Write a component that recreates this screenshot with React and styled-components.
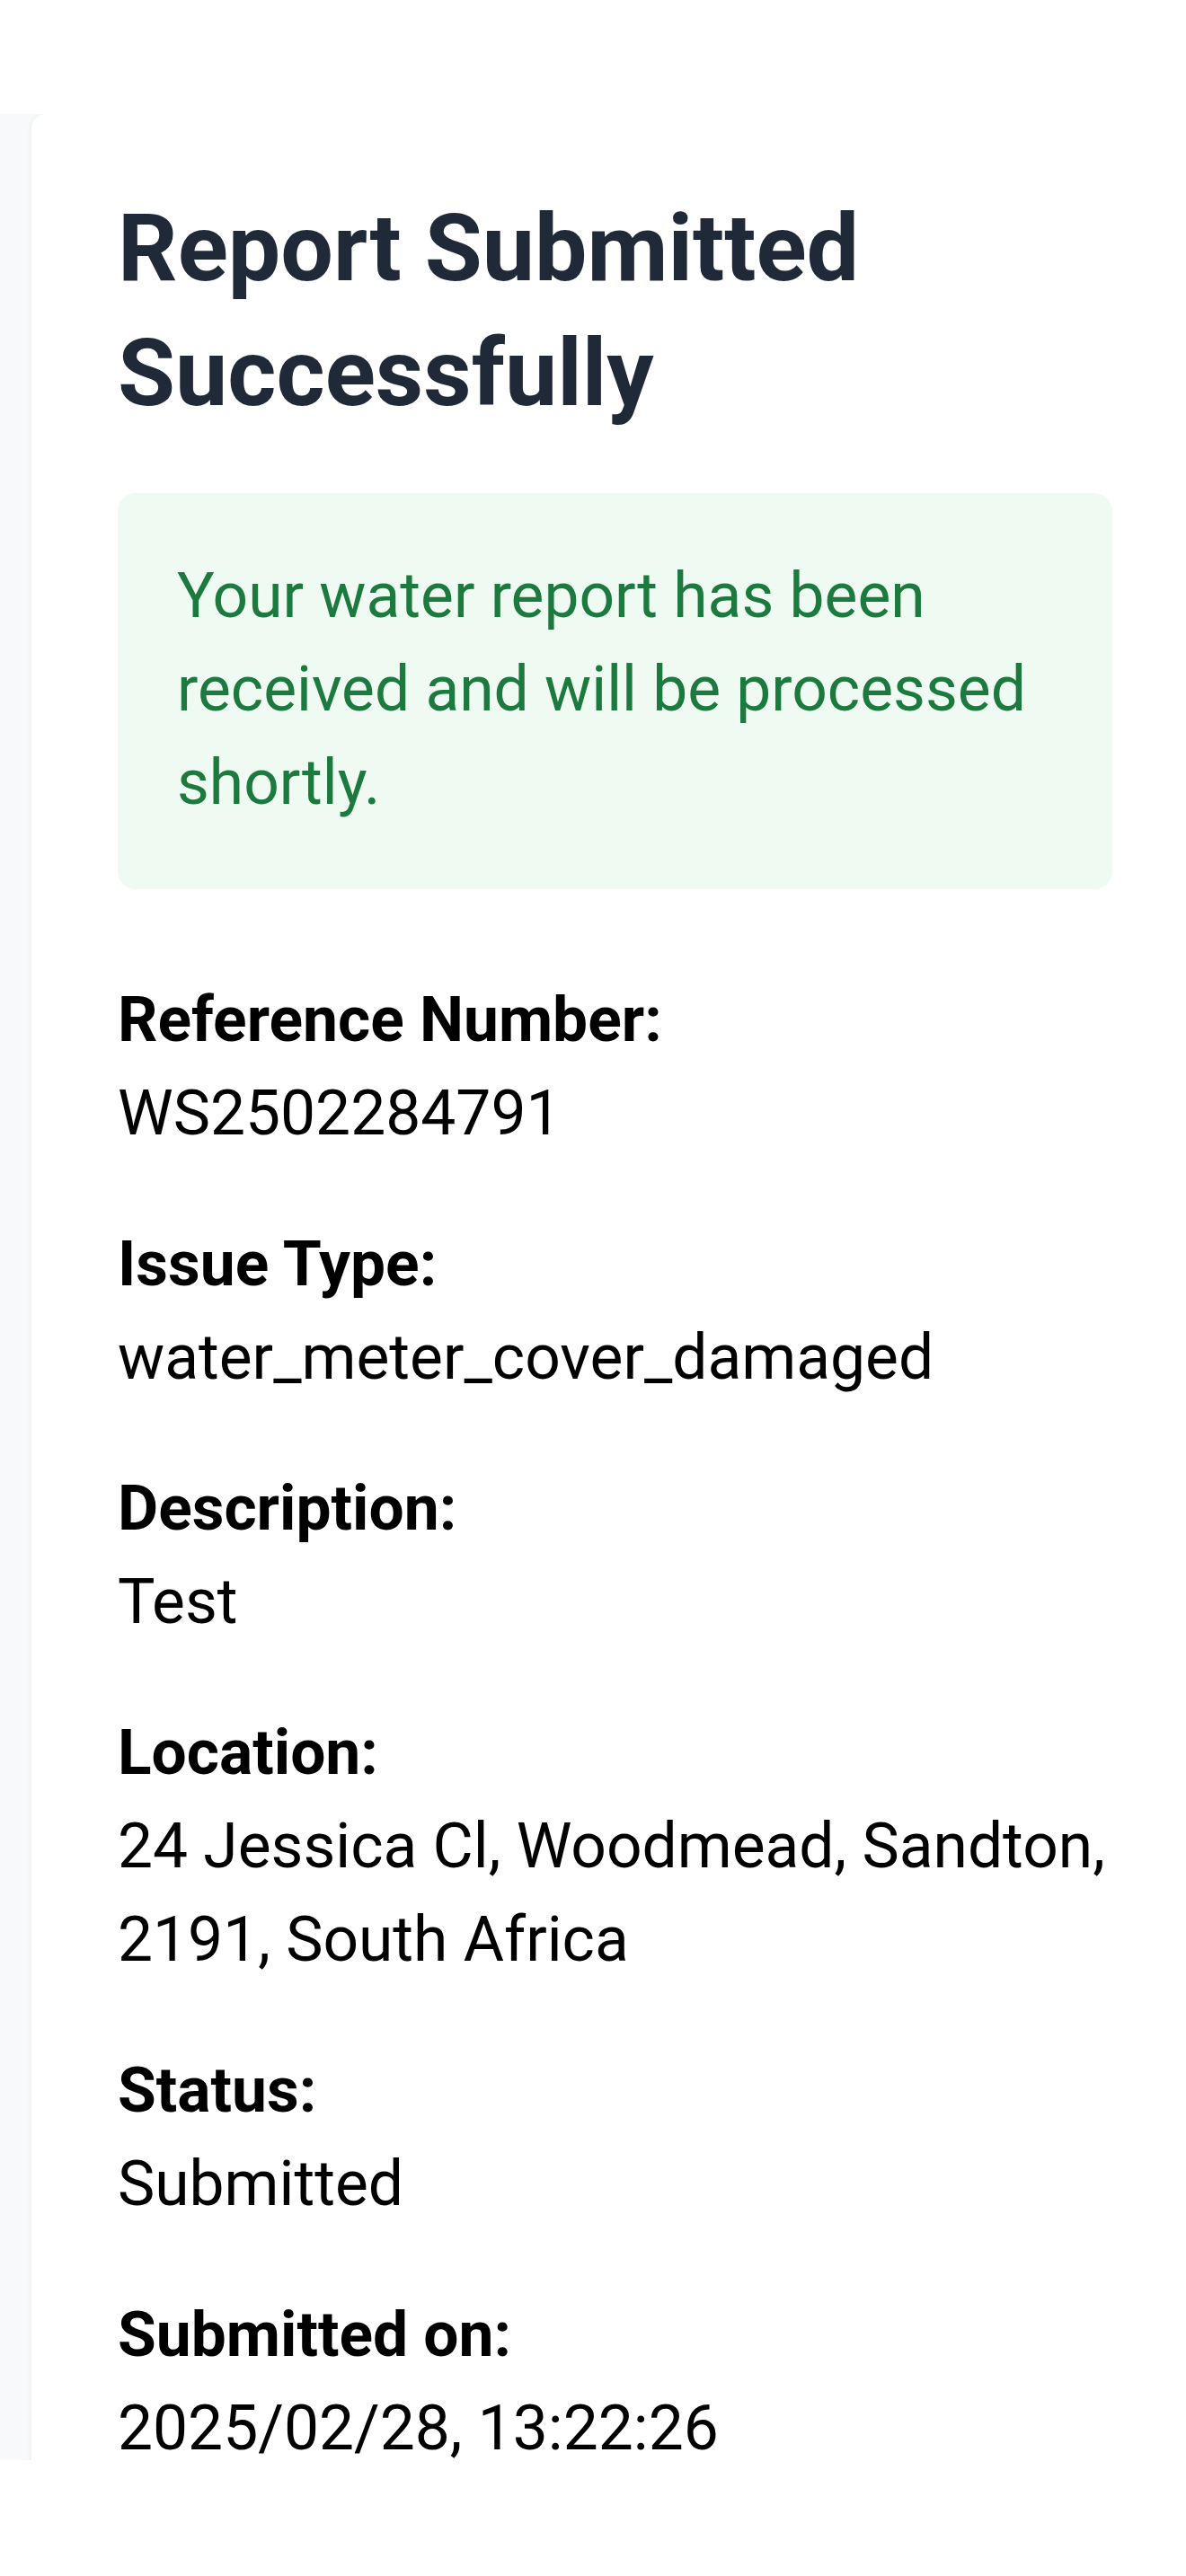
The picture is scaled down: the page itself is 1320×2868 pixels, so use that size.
import React from "react";
import styled, { createGlobalStyle } from "styled-components";

const Global = createGlobalStyle`
  html, body {
    margin: 0;
    padding: 0;
    background: #ffffff;
    overflow: hidden;
  }
  body {
    font-family: Roboto, "Liberation Sans", Arial, sans-serif;
  }
  * { box-sizing: border-box; }
`;

const Page = styled.div`
  width: 1320px;
  height: 2868px;
  padding-top: 127px;
  background: #ffffff;
`;

const Viewport = styled.div`
  height: 2612px;
  overflow: hidden;
  background: #f8f9fa;
  padding-left: 35px;
  display: flex;
  align-items: flex-start;
`;

const Card = styled.main`
  flex: 0 0 1299px;
  min-height: 100%;
  background: #ffffff;
  border-top-left-radius: 16px;
  box-shadow: 0 1px 6px rgba(15, 23, 42, 0.07);
  padding: 80px 96px;
`;

const Title = styled.h1`
  margin: 0 0 64px;
  font-family: Roboto, "Liberation Sans", Arial, sans-serif;
  font-weight: 700;
  font-size: 104px;
  line-height: 139px;
  color: #1f2937;
`;

const Notice = styled.div`
  background: #effbf2;
  border-radius: 20px;
  padding: 63px 66px 66px;
  color: #1d7a3f;
  font-size: 69.5px;
  line-height: 104px;
`;

const Details = styled.dl`
  margin: 94px 0 0;
  display: flex;
  flex-direction: column;
  gap: 64px;
`;

const Item = styled.div`
  display: flex;
  flex-direction: column;
`;

const Label = styled.dt`
  font-weight: 700;
  font-size: 69.5px;
  line-height: 104px;
  color: #000000;
`;

const Value = styled.dd`
  margin: 0;
  font-weight: 400;
  font-size: 69.5px;
  line-height: 104px;
  color: #000000;
`;

const details = [
  ["Reference Number:", "WS2502284791"],
  ["Issue Type:", "water_meter_cover_damaged"],
  ["Description:", "Test"],
  ["Location:", "24 Jessica Cl, Woodmead, Sandton, 2191, South Africa"],
  ["Status:", "Submitted"],
  ["Submitted on:", "2025/02/28, 13:22:26"],
];

export default function App() {
  return (
    <>
      <Global />
      <Page>
        <Viewport>
          <Card>
            <Title>Report Submitted Successfully</Title>
            <Notice>
              Your water report has been received and will be processed shortly.
            </Notice>
            <Details>
              {details.map(([label, value]) => (
                <Item key={label}>
                  <Label>{label}</Label>
                  <Value>{value}</Value>
                </Item>
              ))}
            </Details>
          </Card>
        </Viewport>
      </Page>
    </>
  );
}
